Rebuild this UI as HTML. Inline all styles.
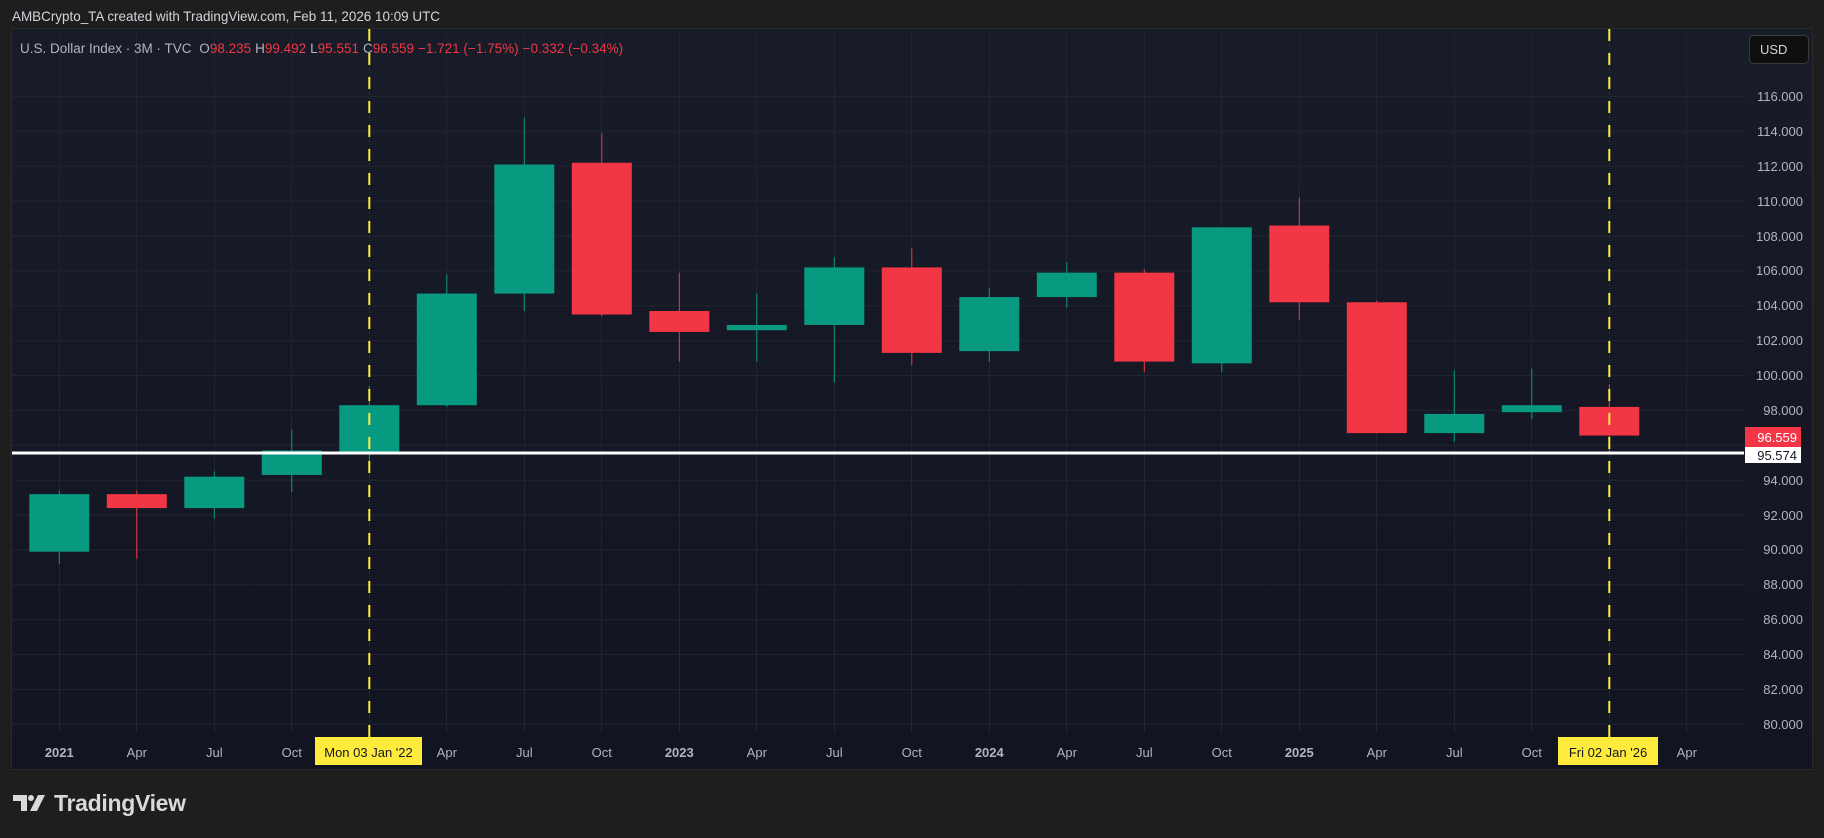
<!DOCTYPE html>
<html><head><meta charset="utf-8"><style>
html,body{margin:0;padding:0;background:#1e1e1e;width:1824px;height:838px;overflow:hidden;font-family:"Liberation Sans",sans-serif;}
svg{position:absolute;left:0;top:0}
</style></head><body>
<svg width="1824" height="838" viewBox="0 0 1824 838" xmlns="http://www.w3.org/2000/svg">
<defs><linearGradient id="bg" x1="0" y1="0" x2="0" y2="1"><stop offset="0" stop-color="#181c28"/><stop offset="1" stop-color="#121521"/></linearGradient></defs>
<rect x="0" y="0" width="1824" height="838" fill="#1e1e1e"/>
<text x="12" y="21" fill="#d1d4dc" font-size="14" textLength="428" lengthAdjust="spacingAndGlyphs">AMBCrypto_TA created with TradingView.com, Feb 11, 2026 10:09 UTC</text>
<rect x="11" y="28" width="1802" height="742" fill="#2a2a2a"/>
<rect x="12" y="29" width="1800" height="740" fill="url(#bg)"/>
<g stroke="#212531" stroke-width="1">
<path d="M12 96.5H1744M12 131.4H1744M12 166.3H1744M12 201.1H1744M12 236H1744M12 270.9H1744M12 305.8H1744M12 340.6H1744M12 375.5H1744M12 410.4H1744M12 445.3H1744M12 480.1H1744M12 515H1744M12 549.9H1744M12 584.8H1744M12 619.6H1744M12 654.5H1744M12 689.4H1744M12 724.3H1744"/>
<path d="M59.5 29V733M136.5 29V733M214.5 29V733M291.5 29V733M369.5 29V733M446.5 29V733M524.5 29V733M601.5 29V733M679.5 29V733M756.5 29V733M834.5 29V733M911.5 29V733M989.5 29V733M1066.5 29V733M1144.5 29V733M1221.5 29V733M1299.5 29V733M1376.5 29V733M1454.5 29V733M1531.5 29V733M1609.5 29V733M1686.5 29V733"/>
</g>
<g transform="translate(0,2119.54) scale(1,-17.44)">
<g fill="#089981">
<rect x="58.8" y="89.2" width="1" height="4.2"/><rect x="29.3" y="89.9" width="60" height="3.3"/>
<rect x="213.8" y="91.8" width="1" height="2.7"/><rect x="184.3" y="92.4" width="60" height="1.8"/>
<rect x="291.3" y="93.3" width="1" height="3.6"/><rect x="261.8" y="94.3" width="60" height="1.4"/>
<rect x="368.8" y="94.6" width="1" height="4.8"/><rect x="339.3" y="95.6" width="60" height="2.7"/>
<rect x="446.3" y="98.2" width="1" height="7.6"/><rect x="416.8" y="98.3" width="60" height="6.4"/>
<rect x="523.8" y="103.7" width="1" height="11.1"/><rect x="494.3" y="104.7" width="60" height="7.4"/>
<rect x="756.3" y="100.8" width="1" height="3.9"/><rect x="726.8" y="102.6" width="60" height="0.3"/>
<rect x="833.8" y="99.6" width="1" height="7.2"/><rect x="804.3" y="102.9" width="60" height="3.3"/>
<rect x="988.8" y="100.8" width="1" height="4.2"/><rect x="959.3" y="101.4" width="60" height="3.1"/>
<rect x="1066.3" y="103.9" width="1" height="2.6"/><rect x="1036.8" y="104.5" width="60" height="1.4"/>
<rect x="1221.3" y="100.2" width="1" height="8.3"/><rect x="1191.8" y="100.7" width="60" height="7.8"/>
<rect x="1453.8" y="96.2" width="1" height="4.1"/><rect x="1424.3" y="96.7" width="60" height="1.1"/>
<rect x="1531.3" y="97.5" width="1" height="2.9"/><rect x="1501.8" y="97.9" width="60" height="0.4"/>
</g>
<g fill="#f23645">
<rect x="136.3" y="89.5" width="1" height="3.9"/><rect x="106.8" y="92.4" width="60" height="0.8"/>
<rect x="601.3" y="103.4" width="1" height="10.5"/><rect x="571.8" y="103.5" width="60" height="8.7"/>
<rect x="678.8" y="100.8" width="1" height="5.1"/><rect x="649.3" y="102.5" width="60" height="1.2"/>
<rect x="911.3" y="100.6" width="1" height="6.7"/><rect x="881.8" y="101.3" width="60" height="4.9"/>
<rect x="1143.8" y="100.2" width="1" height="5.9"/><rect x="1114.3" y="100.8" width="60" height="5.1"/>
<rect x="1298.8" y="103.2" width="1" height="7.0"/><rect x="1269.3" y="104.2" width="60" height="4.4"/>
<rect x="1376.3" y="96.7" width="1" height="7.6"/><rect x="1346.8" y="96.7" width="60" height="7.5"/>
<rect x="1608.8" y="95.55" width="1" height="3.95"/><rect x="1579.3" y="96.56" width="60" height="1.64"/>
</g>
</g>
<rect x="12" y="451.5" width="1732" height="3" fill="#ffffff"/>
<g stroke="#ffeb3b" stroke-width="2" stroke-dasharray="12,12">
<line x1="369.3" y1="29" x2="369.3" y2="737"/>
<line x1="1609.3" y1="29" x2="1609.3" y2="737"/>
</g>
<text x="20" y="53" font-size="13.5" fill="#b2b5be">U.S. Dollar Index · 3M · TVC <tspan dx="4">O</tspan><tspan fill="#f23645">98.235</tspan><tspan dx="4">H</tspan><tspan fill="#f23645">99.492</tspan><tspan dx="4">L</tspan><tspan fill="#f23645">95.551</tspan><tspan dx="4">C</tspan><tspan fill="#f23645">96.559</tspan><tspan dx="4" fill="#f23645">−1.721 (−1.75%)</tspan><tspan dx="4" fill="#f23645">−0.332 (−0.34%)</tspan></text>
<rect x="1749.5" y="35.5" width="59" height="28" rx="4" fill="#0f0f0f" stroke="#3a3a3a"/>
<text x="1760" y="54" font-size="13" fill="#d1d4dc">USD</text>
<g font-size="13" fill="#b2b5be" text-anchor="end">
<text x="1803" y="101">116.000</text><text x="1803" y="136">114.000</text><text x="1803" y="171">112.000</text><text x="1803" y="206">110.000</text><text x="1803" y="241">108.000</text><text x="1803" y="275">106.000</text><text x="1803" y="310">104.000</text><text x="1803" y="345">102.000</text><text x="1803" y="380">100.000</text><text x="1803" y="415">98.000</text><text x="1803" y="485">94.000</text><text x="1803" y="520">92.000</text><text x="1803" y="554">90.000</text><text x="1803" y="589">88.000</text><text x="1803" y="624">86.000</text><text x="1803" y="659">84.000</text><text x="1803" y="694">82.000</text><text x="1803" y="729">80.000</text>
</g>
<rect x="1745" y="427" width="56" height="20" fill="#f23645"/>
<text x="1797" y="442" font-size="13" fill="#ffffff" text-anchor="end">96.559</text>
<rect x="1745" y="447" width="56" height="16" fill="#ffffff"/>
<text x="1797" y="460" font-size="13" fill="#131722" text-anchor="end">95.574</text>
<g font-size="13" fill="#b2b5be" text-anchor="middle">
<text x="59.3" y="757" font-weight="bold">2021</text><text x="136.8" y="757">Apr</text><text x="214.3" y="757">Jul</text><text x="291.8" y="757">Oct</text>
<text x="446.8" y="757">Apr</text><text x="524.3" y="757">Jul</text><text x="601.8" y="757">Oct</text>
<text x="679.3" y="757" font-weight="bold">2023</text><text x="756.8" y="757">Apr</text><text x="834.3" y="757">Jul</text><text x="911.8" y="757">Oct</text>
<text x="989.3" y="757" font-weight="bold">2024</text><text x="1066.8" y="757">Apr</text><text x="1144.3" y="757">Jul</text><text x="1221.8" y="757">Oct</text>
<text x="1299.3" y="757" font-weight="bold">2025</text><text x="1376.8" y="757">Apr</text><text x="1454.3" y="757">Jul</text><text x="1531.8" y="757">Oct</text>
<text x="1686.8" y="757">Apr</text>
</g>
<rect x="315" y="737" width="107" height="28" fill="#ffeb3b"/>
<text x="368.5" y="757" font-size="13" fill="#131722" text-anchor="middle">Mon 03 Jan '22</text>
<rect x="1558" y="737" width="100" height="28" fill="#ffeb3b"/>
<text x="1608" y="757" font-size="13" fill="#131722" text-anchor="middle">Fri 02 Jan '26</text>
<g fill="#d9d9d9">
<path d="M13 795H27V811H21V801H13Z"/>
<circle cx="31" cy="798" r="3"/>
<path d="M38 795H45L37 811H30Z"/>
</g>
<text x="54" y="811" font-size="23" font-weight="bold" fill="#d9d9d9" letter-spacing="-0.3">TradingView</text>
</svg>
</body></html>
